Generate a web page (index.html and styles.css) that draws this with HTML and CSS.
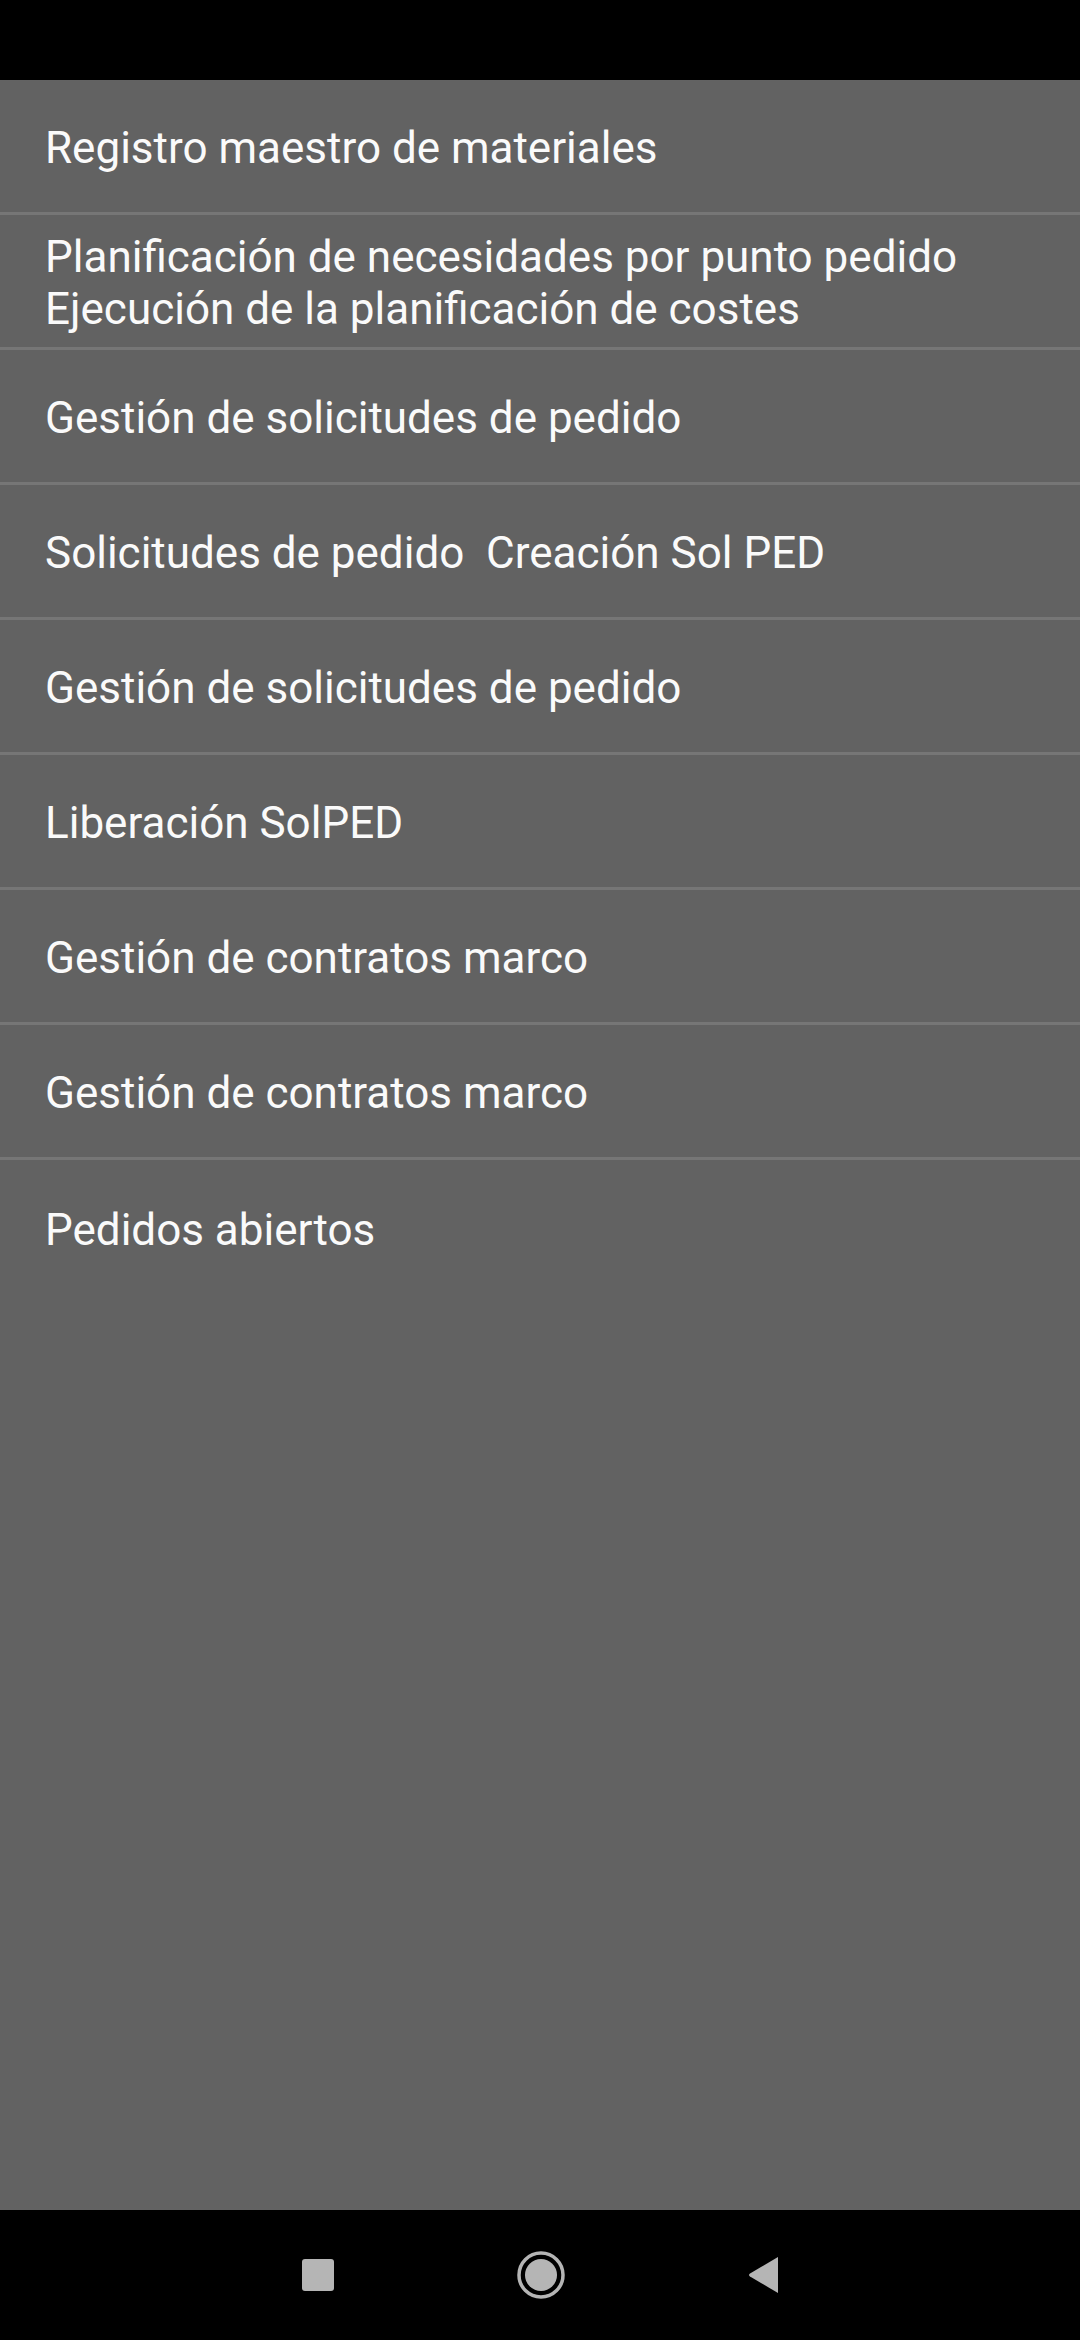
FILE: index.html
```html
<!DOCTYPE html>
<html lang="es">
<head>
    <meta charset="UTF-8">
    <meta name="viewport" content="width=device-width, initial-scale=1.0">
    <title>Menú</title>
    <link rel="stylesheet" href="styles.css">
</head>
<body>
    <div class="status-bar"></div>

    <main class="menu">
        <div class="menu-item">Registro maestro de materiales</div>
        <div class="menu-item">Planificación de necesidades por punto pedido<br>Ejecución de la planificación de costes</div>
        <div class="menu-item">Gestión de solicitudes de pedido</div>
        <div class="menu-item">Solicitudes de pedido&nbsp; Creación Sol PED</div>
        <div class="menu-item">Gestión de solicitudes de pedido</div>
        <div class="menu-item">Liberación SolPED</div>
        <div class="menu-item">Gestión de contratos marco</div>
        <div class="menu-item">Gestión de contratos marco</div>
        <div class="menu-item last">Pedidos abiertos</div>
    </main>

    <nav class="nav-bar">
        <span class="nav-recent"></span>
        <svg class="nav-home" width="48" height="48" viewBox="0 0 48 48">
            <circle cx="24" cy="24" r="22" fill="none" stroke="#b5b5b5" stroke-width="3.5"/>
            <circle cx="24" cy="24" r="16" fill="#b5b5b5"/>
        </svg>
        <svg class="nav-back" width="30" height="36" viewBox="0 0 30 36">
            <path d="M30 0 L30 36 L2 19.5 Q0 18 2 16.5 Z" fill="#b5b5b5"/>
        </svg>
    </nav>
</body>
</html>
```

FILE: styles.css
```css
html, body {
    margin: 0;
    padding: 0;
}

body {
    width: 1080px;
    height: 2340px;
    display: flex;
    flex-direction: column;
    background-color: #626262;
    font-family: Roboto, "Noto Sans", sans-serif;
    color: #fafafa;
}

.status-bar {
    height: 80px;
    background-color: #000;
    flex-shrink: 0;
}

.menu {
    flex: 1;
    background-color: #626262;
}

.menu-item {
    min-height: 135px;
    box-sizing: border-box;
    display: flex;
    align-items: center;
    padding: 4px 45px 0;
    font-size: 44px;
    border-bottom: 3px solid #767676;
}

.menu-item.last {
    border-bottom: none;
}

.nav-bar {
    height: 130px;
    flex-shrink: 0;
    background-color: #000;
    display: flex;
    align-items: center;
    justify-content: center;
    gap: 183px;
}

.nav-recent {
    width: 32px;
    height: 32px;
    border-radius: 3px;
    background-color: #b5b5b5;
}
```
